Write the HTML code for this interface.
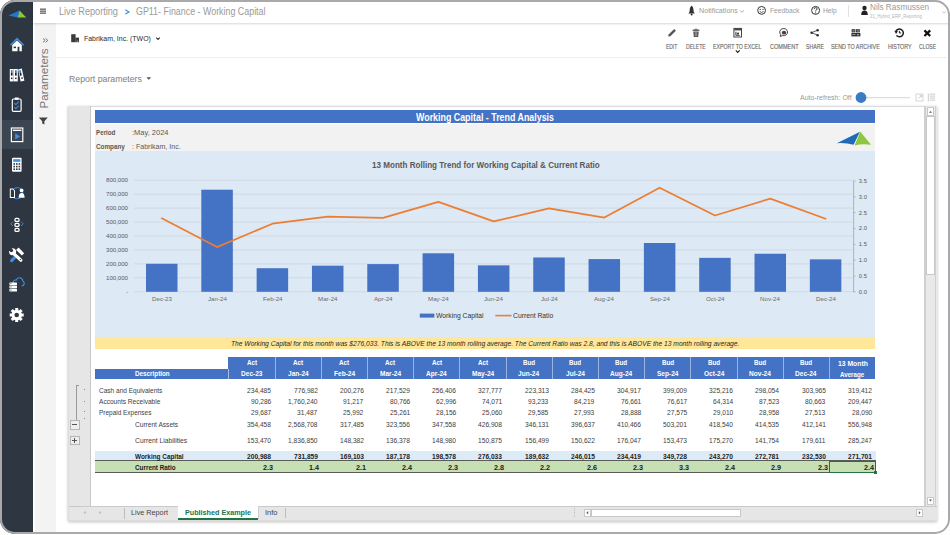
<!DOCTYPE html>
<html><head><meta charset="utf-8">
<style>
*{margin:0;padding:0;box-sizing:border-box}
html,body{width:950px;height:535px;overflow:hidden;background:#fff;font-family:"Liberation Sans",sans-serif}
.a{position:absolute}
.t{position:absolute;white-space:nowrap;line-height:1}
#frame{position:absolute;left:0;top:0;width:949.5px;height:534px;border:2.6px solid #a9a9ab;border-radius:15px;box-shadow:0 0 0 30px #fff;z-index:50;pointer-events:none}
svg{position:absolute;overflow:visible}
</style></head><body>
<!-- sidebar -->
<div class="a" style="left:0;top:0;width:33px;height:535px;background:#2e3741"></div>
<div class="a" style="left:0;top:119.7px;width:33px;height:29.5px;background:#3b4652"></div>
<!-- header -->
<div class="a" style="left:33px;top:0;width:917px;height:22.5px;background:#fff;box-shadow:0 1px 2px rgba(0,0,0,.16);z-index:3"></div>
<!-- param panel -->
<div class="a" style="left:33px;top:22.5px;width:22.7px;height:513px;background:#f3f3f3;border-left:2.6px solid #fdfdfd"></div>
<!-- toolbar separator -->
<div class="a" style="left:55.7px;top:57.3px;width:891px;height:1px;background:#efefef"></div>

<!-- HEADER TEXT -->
<!--HDR-->
<div class="t" style="left:59.00px;top:7px;font-size:10.05px;color:#9a9a9a;z-index:6;transform:scaleX(0.910);transform-origin:0 0;">Live Reporting</div>
<div class="t" style="left:136.00px;top:7px;font-size:10.05px;color:#9a9a9a;z-index:6;transform:scaleX(0.884);transform-origin:0 0;">GP11- Finance - Working Capital</div>
<div class="t" style="left:699.00px;top:7px;font-size:7.25px;color:#9a9a9a;z-index:6;transform:scaleX(0.985);transform-origin:0 0;">Notifications</div>
<div class="t" style="left:769.50px;top:7px;font-size:7.55px;color:#9a9a9a;z-index:6;transform:scaleX(0.889);transform-origin:0 0;">Feedback</div>
<div class="t" style="left:823.00px;top:7px;font-size:7.55px;color:#9a9a9a;z-index:6;transform:scaleX(0.889);transform-origin:0 0;">Help</div>
<div class="t" style="left:870.00px;top:3px;font-size:8.60px;color:#9a9a9a;z-index:6;transform:scaleX(0.950);transform-origin:0 0;">Nils Rasmussen</div>
<div class="t" style="left:870.00px;top:15px;font-size:4.80px;color:#b5b5b5;z-index:6;transform:scaleX(0.898);transform-origin:0 0;">21_Hybrid_ERP_Reporting</div>
<div class="t" style="left:83.60px;top:35px;font-size:7.85px;color:#2a2a2a;z-index:6;transform:scaleX(0.887);transform-origin:0 0;">Fabrikam, Inc. (TWO)</div>
<div class="t" style="left:666.30px;top:44px;font-size:6.70px;color:#666;z-index:6;transform:scaleX(0.740);transform-origin:0 0;-webkit-text-stroke:0.12px #666;">EDIT</div>
<div class="t" style="left:686.00px;top:44px;font-size:6.70px;color:#666;z-index:6;transform:scaleX(0.752);transform-origin:0 0;-webkit-text-stroke:0.12px #666;">DELETE</div>
<div class="t" style="left:713.20px;top:44px;font-size:6.70px;color:#666;z-index:6;transform:scaleX(0.781);transform-origin:0 0;-webkit-text-stroke:0.12px #666;">EXPORT TO EXCEL</div>
<div class="t" style="left:769.70px;top:44px;font-size:6.70px;color:#666;z-index:6;transform:scaleX(0.832);transform-origin:0 0;-webkit-text-stroke:0.12px #666;">COMMENT</div>
<div class="t" style="left:805.70px;top:44px;font-size:6.70px;color:#666;z-index:6;transform:scaleX(0.780);transform-origin:0 0;-webkit-text-stroke:0.12px #666;">SHARE</div>
<div class="t" style="left:831.20px;top:44px;font-size:6.70px;color:#666;z-index:6;transform:scaleX(0.803);transform-origin:0 0;-webkit-text-stroke:0.12px #666;">SEND TO ARCHIVE</div>
<div class="t" style="left:887.60px;top:44px;font-size:6.70px;color:#666;z-index:6;transform:scaleX(0.799);transform-origin:0 0;-webkit-text-stroke:0.12px #666;">HISTORY</div>
<div class="t" style="left:918.50px;top:44px;font-size:6.70px;color:#666;z-index:6;transform:scaleX(0.753);transform-origin:0 0;-webkit-text-stroke:0.12px #666;">CLOSE</div>
<div class="t" style="left:69.00px;top:74px;font-size:9.90px;color:#7d7d7d;z-index:6;transform:scaleX(0.885);transform-origin:0 0;">Report parameters</div>
<div class="t" style="left:800.00px;top:94px;font-size:7.55px;color:#9a9a9a;z-index:6;transform:scaleX(0.927);transform-origin:0 0;">Auto-refresh: Off</div>
<!--/HDR-->
<div class="a" style="left:848px;top:5px;width:1px;height:12px;background:#e2e2e2;z-index:4"></div>
<svg width="950" height="60" viewBox="0 0 950 60" style="left:0;top:0;z-index:6">
  <path d="M740 10.4 L742 12.2 L744 10.4" fill="none" stroke="#999" stroke-width=".8"/>
  <path d="M125.3 9.7 L129 11.9 L125.3 14.1" fill="none" stroke="#3f8ee0" stroke-width="1.15"/>
  <!-- bell -->
  <path d="M688.4 13.4 Q689.8 12.2 689.8 9.6 Q689.8 6.6 691.6 6.6 Q693.4 6.6 693.4 9.6 Q693.4 12.2 694.8 13.4 Z" fill="#333"/>
  <circle cx="691.6" cy="14.4" r="1" fill="#333"/><circle cx="691.6" cy="6.4" r=".7" fill="#333"/>
  <!-- smiley -->
  <circle cx="761.6" cy="10.4" r="3.9" fill="none" stroke="#333" stroke-width="1"/>
  <circle cx="760.2" cy="9.4" r=".6" fill="#333"/><circle cx="763" cy="9.4" r=".6" fill="#333"/>
  <path d="M759.6 11.4 Q761.6 13.6 763.6 11.4" fill="none" stroke="#333" stroke-width=".8"/>
  <!-- help -->
  <circle cx="815.6" cy="10.4" r="4" fill="none" stroke="#333" stroke-width="1"/>
  <path d="M814.2 9.2 Q814.2 7.6 815.6 7.6 Q817.1 7.6 817.1 9 Q817.1 10 815.6 10.6 V11.4" fill="none" stroke="#333" stroke-width=".9"/>
  <circle cx="815.6" cy="12.9" r=".55" fill="#333"/>
  <!-- person -->
  <circle cx="864.5" cy="8" r="2.2" fill="#222"/>
  <path d="M861.2 15 Q861.2 10.6 864.5 10.6 Q867.8 10.6 867.8 15 Z" fill="#222"/>
  <path d="M942.4 11.6 L944 13 L945.6 11.6" fill="none" stroke="#aaa" stroke-width=".7"/>
</svg>

<!-- TOOLBAR -->
<svg width="950" height="60" viewBox="0 0 950 60" style="left:0;top:0;z-index:6">
  <!-- building -->
  <rect x="71.2" y="34.2" width="4.4" height="8" fill="#3a3a3a"/>
  <rect x="75.4" y="37.6" width="3.6" height="4.6" fill="#3a3a3a"/>
  <rect x="76.6" y="40.4" width="1.6" height="1.6" fill="#3f8ee0"/>
  <path d="M156.2 37.6 L158 39.4 L159.8 37.6" fill="none" stroke="#333" stroke-width="1.1"/>
  <!-- edit pencil -->
  <path d="M668.2 36.6 L668.6 34.6 L674.2 29 L675.9 30.7 L670.3 36.3 Z" fill="#555"/>
  <!-- trash -->
  <rect x="692.6" y="29.6" width="6.8" height="1.3" fill="#555"/>
  <rect x="694.7" y="28.8" width="2.6" height="1" fill="#555"/>
  <path d="M693.3 31.4 H698.7 L698.2 37 H693.8 Z" fill="#555"/>
  <g fill="#bbb"><rect x="694.9" y="32.2" width=".6" height="4"/><rect x="696.5" y="32.2" width=".6" height="4"/></g>
  <!-- export -->
  <rect x="733.9" y="28.4" width="7.6" height="8.6" fill="none" stroke="#444" stroke-width="1"/>
  <rect x="734.2" y="28.6" width="7" height="1.8" fill="#444"/>
  <path d="M735.8 31.8 V35.4 H739.8" fill="none" stroke="#444" stroke-width=".9"/>
  <rect x="736.6" y="32.6" width="2.4" height="2" fill="#444"/>
  <path d="M735.8 50.4 L737.7 52.3 L739.6 50.4" fill="none" stroke="#222" stroke-width="1.2"/>
  <!-- comment -->
  <path d="M780.2 36.4 L780.8 34.6 A3.9 3.6 0 1 1 782.6 35.6 Z" fill="none" stroke="#444" stroke-width="1"/>
  <ellipse cx="784" cy="32.7" rx="2.2" ry="1.9" fill="#444"/>
  <!-- share -->
  <g fill="#333"><circle cx="811.6" cy="32.7" r="1.3"/><circle cx="817.6" cy="30.2" r="1.3"/><circle cx="817.6" cy="35.2" r="1.3"/></g>
  <path d="M811.6 32.7 L817.6 30.2 M811.6 32.7 L817.6 35.2" stroke="#333" stroke-width=".8"/>
  <!-- archive -->
  <rect x="851.6" y="29.2" width="3.8" height="3.2" fill="#333"/>
  <rect x="856" y="29.2" width="3.8" height="3.2" fill="#333"/>
  <rect x="851.4" y="33" width="9" height="3.4" fill="#333"/>
  <g fill="#ddd"><rect x="852.4" y="30.6" width="2.2" height=".7"/><rect x="856.8" y="30.6" width="2.2" height=".7"/><rect x="852.4" y="34.2" width="3" height=".6"/><circle cx="858" cy="34.8" r=".8"/></g>
  <!-- history -->
  <path d="M895.8 31.6 A3.9 3.9 0 1 1 896.4 35.4" fill="none" stroke="#222" stroke-width="1.5"/>
  <path d="M894.4 30.8 L896 34 L898 31.2 Z" fill="#222"/>
  <path d="M899.4 30.8 V33 L901.2 33" fill="none" stroke="#222" stroke-width="1"/>
  <!-- close -->
  <path d="M924.4 30.4 L930.2 36 M930.2 30.4 L924.4 36" stroke="#111" stroke-width="2.2"/>
</svg>

<!-- report params / auto refresh -->
<svg width="950" height="110" viewBox="0 0 950 110" style="left:0;top:0;z-index:6">
  <path d="M147 77.6 L148.8 79.4 L150.6 77.6 Z" fill="#555" stroke="#555" stroke-width=".6"/>
  <rect x="866" y="97" width="44" height="1.2" fill="#ddd"/>
  <circle cx="861" cy="97.5" r="5.4" fill="#3b7dc4"/>
  <rect x="916" y="94" width="7" height="7" fill="none" stroke="#ccc" stroke-width=".8"/>
  <path d="M918.4 98.6 L921.6 95.4 M919.6 95.4 H921.6 V97.4" fill="none" stroke="#bbb" stroke-width=".7"/>
  <g fill="#ccc"><rect x="927.8" y="93.6" width="1" height="7.8"/><rect x="929.6" y="93.6" width="5.6" height="1"/><rect x="929.6" y="95.6" width="5.6" height="1"/><rect x="929.6" y="97.6" width="5.6" height="1"/><rect x="929.6" y="99.6" width="5.6" height="1"/></g>
</svg>

<!--EXCEL-->
<div class="a" style="left:68.00px;top:105.60px;width:869.40px;height:415.20px;background:#fff;box-shadow:0 1px 3px rgba(0,0,0,.25);border:1px solid #dcdcdc"></div>
<div class="a" style="left:68.50px;top:106.00px;width:21.00px;height:399.50px;background:#e6e6e6;"></div>
<div class="a" style="left:89.50px;top:106.00px;width:1.10px;height:399.50px;background:#c8c8c8;"></div>
<div class="a" style="left:924.00px;top:106.00px;width:13.00px;height:399.50px;background:#e9e9e9;"></div>
<div class="a" style="left:924.00px;top:106.00px;width:1.60px;height:399.50px;background:#cfcfcf;"></div>
<div class="a" style="left:935.40px;top:106.00px;width:1.00px;height:399.50px;background:#d0d0d0;"></div>
<div class="a" style="left:926.60px;top:107.20px;width:7.80px;height:8.40px;background:#fff;border:0.6px solid #c8c8c8"></div>
<div class="a" style="left:926.60px;top:496.60px;width:7.80px;height:8.40px;background:#fff;border:0.6px solid #c8c8c8"></div>
<svg width="950" height="535" viewBox="0 0 950 535" style="left:0;top:0"><path d="M929 112.8 L930.5 111 L932 112.8 Z" fill="#555"/><path d="M929 499.6 L930.5 501.4 L932 499.6 Z" fill="#555"/></svg>
<div class="a" style="left:68.50px;top:505.50px;width:868.50px;height:14.50px;background:#e6e6e6;"></div>
<div class="a" style="left:68.50px;top:505.50px;width:868.50px;height:1.10px;background:#c9c9c9;"></div>
<div class="a" style="left:95.00px;top:110.30px;width:780.40px;height:13.10px;background:#4472c4;"></div>
<div class="a" style="left:95.00px;top:124.40px;width:780.40px;height:27.00px;background:#f2f2f2;"></div>
<div class="a" style="left:95.00px;top:151.40px;width:780.40px;height:185.20px;background:#dde9f5;"></div>
<div class="a" style="left:95.00px;top:336.60px;width:780.40px;height:12.80px;background:#ffe699;"></div>
<svg width="950" height="535" viewBox="0 0 950 535" style="left:0;top:0"><path d="M836.8 143.2 L860 131.8 L853.6 144.8 Q846 142.6 836.8 143.2 Z" fill="#1f6bb5"/><path d="M860.4 131.8 L871 144.8 Q862 143.4 854.6 145.4 Z" fill="#8dc63f"/></svg>
<div class="a" style="left:926.40px;top:116.00px;width:8.20px;height:159.40px;background:#fff;border:0.6px solid #c8c8c8"></div>
<div class="t" style="left:416.10px;top:113px;font-size:10.15px;font-weight:bold;color:#fff;transform:scaleX(0.876);transform-origin:0 0;">Working Capital - Trend Analysis</div>
<div class="t" style="left:95.80px;top:130px;font-size:7.10px;font-weight:bold;color:#595959;transform:scaleX(0.879);transform-origin:0 0;">Period</div>
<div class="t" style="left:132.20px;top:129px;font-size:7.55px;color:#595959;transform:scaleX(0.992);transform-origin:0 0;">:May, 2024</div>
<div class="t" style="left:95.80px;top:144px;font-size:7.10px;font-weight:bold;color:#595959;transform:scaleX(0.894);transform-origin:0 0;">Company</div>
<div class="t" style="left:132.20px;top:143px;font-size:7.55px;color:#595959;transform:scaleX(0.936);transform-origin:0 0;">: Fabrikam, Inc.</div>
<div class="t" style="left:371.50px;top:162px;font-size:8.15px;font-weight:bold;color:#595959;transform:scaleX(0.994);transform-origin:0 0;">13 Month Rolling Trend for Working Capital &amp; Current Ratio</div>
<svg width="950" height="535" viewBox="0 0 950 535" style="left:0;top:0"><rect x="134.1" y="291.40" width="719.5" height="0.8" fill="#ccd5df"/><rect x="134.1" y="277.45" width="719.5" height="0.8" fill="#ccd5df"/><rect x="134.1" y="263.50" width="719.5" height="0.8" fill="#ccd5df"/><rect x="134.1" y="249.55" width="719.5" height="0.8" fill="#ccd5df"/><rect x="134.1" y="235.60" width="719.5" height="0.8" fill="#ccd5df"/><rect x="134.1" y="221.65" width="719.5" height="0.8" fill="#ccd5df"/><rect x="134.1" y="207.70" width="719.5" height="0.8" fill="#ccd5df"/><rect x="134.1" y="193.75" width="719.5" height="0.8" fill="#ccd5df"/><rect x="134.1" y="179.80" width="719.5" height="0.8" fill="#ccd5df"/><rect x="853.2" y="180.8" width="0.9" height="111.4" fill="#a9adb2"/><rect x="853.2" y="291.45" width="2.6" height="0.7" fill="#a9adb2"/><rect x="853.2" y="275.62" width="2.6" height="0.7" fill="#a9adb2"/><rect x="853.2" y="259.79" width="2.6" height="0.7" fill="#a9adb2"/><rect x="853.2" y="243.96" width="2.6" height="0.7" fill="#a9adb2"/><rect x="853.2" y="228.13" width="2.6" height="0.7" fill="#a9adb2"/><rect x="853.2" y="212.30" width="2.6" height="0.7" fill="#a9adb2"/><rect x="853.2" y="196.47" width="2.6" height="0.7" fill="#a9adb2"/><rect x="853.2" y="180.64" width="2.6" height="0.7" fill="#a9adb2"/><rect x="146.00" y="263.76" width="31.5" height="28.04" fill="#4472c4"/><rect x="201.32" y="189.71" width="31.5" height="102.09" fill="#4472c4"/><rect x="256.64" y="268.21" width="31.5" height="23.59" fill="#4472c4"/><rect x="311.96" y="265.69" width="31.5" height="26.11" fill="#4472c4"/><rect x="367.28" y="264.10" width="31.5" height="27.70" fill="#4472c4"/><rect x="422.60" y="253.29" width="31.5" height="38.51" fill="#4472c4"/><rect x="477.92" y="265.35" width="31.5" height="26.45" fill="#4472c4"/><rect x="533.24" y="257.48" width="31.5" height="34.32" fill="#4472c4"/><rect x="588.56" y="259.10" width="31.5" height="32.70" fill="#4472c4"/><rect x="643.88" y="243.01" width="31.5" height="48.79" fill="#4472c4"/><rect x="699.20" y="257.86" width="31.5" height="33.94" fill="#4472c4"/><rect x="754.52" y="253.75" width="31.5" height="38.05" fill="#4472c4"/><rect x="809.84" y="259.36" width="31.5" height="32.44" fill="#4472c4"/><polyline points="161.75,218.3 217.07,247.1 272.39,223.7 327.71,216.7 383.03,217.9 438.35,201.9 493.67,221.4 548.99,208.3 604.31,217.6 659.63,187.7 714.95,215.5 770.27,198.6 825.59,218.8" fill="none" stroke="#ed7d31" stroke-width="1.7" stroke-linejoin="round" stroke-linecap="round"/><rect x="419.8" y="313.6" width="14.6" height="4" fill="#4472c4"/><rect x="495.3" y="314.8" width="16.2" height="1.6" fill="#ed7d31"/></svg>
<div class="t" style="left:126.20px;top:290px;font-size:5.60px;color:#595959;">-</div>
<div class="t" style="left:106.00px;top:276px;font-size:5.60px;color:#595959;transform:scaleX(1.087);transform-origin:0 0;">100,000</div>
<div class="t" style="left:106.00px;top:262px;font-size:5.60px;color:#595959;transform:scaleX(1.087);transform-origin:0 0;">200,000</div>
<div class="t" style="left:106.00px;top:248px;font-size:5.60px;color:#595959;transform:scaleX(1.087);transform-origin:0 0;">300,000</div>
<div class="t" style="left:106.00px;top:234px;font-size:5.60px;color:#595959;transform:scaleX(1.087);transform-origin:0 0;">400,000</div>
<div class="t" style="left:106.00px;top:220px;font-size:5.60px;color:#595959;transform:scaleX(1.087);transform-origin:0 0;">500,000</div>
<div class="t" style="left:106.00px;top:206px;font-size:5.60px;color:#595959;transform:scaleX(1.087);transform-origin:0 0;">600,000</div>
<div class="t" style="left:106.00px;top:192px;font-size:5.60px;color:#595959;transform:scaleX(1.087);transform-origin:0 0;">700,000</div>
<div class="t" style="left:106.00px;top:178px;font-size:5.60px;color:#595959;transform:scaleX(1.087);transform-origin:0 0;">800,000</div>
<div class="t" style="left:858.80px;top:290px;font-size:5.80px;color:#595959;">0.0</div>
<div class="t" style="left:858.80px;top:274px;font-size:5.80px;color:#595959;">0.5</div>
<div class="t" style="left:858.80px;top:258px;font-size:5.80px;color:#595959;">1.0</div>
<div class="t" style="left:858.80px;top:242px;font-size:5.80px;color:#595959;">1.5</div>
<div class="t" style="left:858.80px;top:226px;font-size:5.80px;color:#595959;">2.0</div>
<div class="t" style="left:858.80px;top:211px;font-size:5.80px;color:#595959;">2.5</div>
<div class="t" style="left:858.80px;top:195px;font-size:5.80px;color:#595959;">3.0</div>
<div class="t" style="left:858.80px;top:179px;font-size:5.80px;color:#595959;">3.5</div>
<div class="t" style="left:151.80px;top:297px;font-size:5.80px;color:#6a6a6a;transform:scaleX(1.064);transform-origin:0 0;">Dec-23</div>
<div class="t" style="left:207.63px;top:297px;font-size:5.80px;color:#6a6a6a;transform:scaleX(1.064);transform-origin:0 0;">Jan-24</div>
<div class="t" style="left:262.61px;top:297px;font-size:5.80px;color:#6a6a6a;transform:scaleX(1.064);transform-origin:0 0;">Feb-24</div>
<div class="t" style="left:317.93px;top:297px;font-size:5.80px;color:#6a6a6a;transform:scaleX(1.064);transform-origin:0 0;">Mar-24</div>
<div class="t" style="left:373.77px;top:297px;font-size:5.80px;color:#6a6a6a;transform:scaleX(1.064);transform-origin:0 0;">Apr-24</div>
<div class="t" style="left:428.06px;top:297px;font-size:5.80px;color:#6a6a6a;transform:scaleX(1.064);transform-origin:0 0;">May-24</div>
<div class="t" style="left:484.23px;top:297px;font-size:5.80px;color:#6a6a6a;transform:scaleX(1.064);transform-origin:0 0;">Jun-24</div>
<div class="t" style="left:540.58px;top:297px;font-size:5.80px;color:#6a6a6a;transform:scaleX(1.064);transform-origin:0 0;">Jul-24</div>
<div class="t" style="left:594.36px;top:297px;font-size:5.80px;color:#6a6a6a;transform:scaleX(1.064);transform-origin:0 0;">Aug-24</div>
<div class="t" style="left:649.68px;top:297px;font-size:5.80px;color:#6a6a6a;transform:scaleX(1.064);transform-origin:0 0;">Sep-24</div>
<div class="t" style="left:705.69px;top:297px;font-size:5.80px;color:#6a6a6a;transform:scaleX(1.064);transform-origin:0 0;">Oct-24</div>
<div class="t" style="left:760.32px;top:297px;font-size:5.80px;color:#6a6a6a;transform:scaleX(1.064);transform-origin:0 0;">Nov-24</div>
<div class="t" style="left:815.64px;top:297px;font-size:5.80px;color:#6a6a6a;transform:scaleX(1.064);transform-origin:0 0;">Dec-24</div>
<div class="t" style="left:436.00px;top:313px;font-size:6.70px;color:#333;transform:scaleX(1.011);transform-origin:0 0;">Working Capital</div>
<div class="t" style="left:512.70px;top:313px;font-size:6.70px;color:#333;transform:scaleX(1.012);transform-origin:0 0;">Current Ratio</div>
<div class="t" style="left:231.00px;top:340px;font-size:7.70px;font-style:italic;color:#262626;transform:scaleX(0.868);transform-origin:0 0;">The Working Capital for this month was $276,033. This is ABOVE the 13 month rolling average. The Current Ratio was 2.8, and this is ABOVE the 13 month rolling average.</div>
<div class="a" style="left:95.00px;top:450.80px;width:780.50px;height:10.20px;background:#ddebf7;"></div>
<div class="a" style="left:95.00px;top:461.00px;width:780.50px;height:11.20px;background:#c6e0b4;"></div>
<div class="a" style="left:95.00px;top:460.40px;width:780.50px;height:1.00px;background:#5b5b5b;"></div>
<div class="a" style="left:95.00px;top:471.60px;width:780.50px;height:1.00px;background:#5b5b5b;"></div>
<div class="a" style="left:94.70px;top:368.50px;width:133.60px;height:10.60px;background:#4472c4;"></div>
<div class="a" style="left:228.30px;top:357.40px;width:647.00px;height:21.70px;background:#4472c4;"></div>
<div class="a" style="left:228.00px;top:368.50px;width:0.90px;height:10.60px;background:#a9bde3;"></div>
<div class="a" style="left:274.64px;top:357.40px;width:0.70px;height:21.70px;background:#9db4de;"></div>
<div class="a" style="left:320.83px;top:357.40px;width:0.70px;height:21.70px;background:#9db4de;"></div>
<div class="a" style="left:367.02px;top:357.40px;width:0.70px;height:21.70px;background:#9db4de;"></div>
<div class="a" style="left:413.21px;top:357.40px;width:0.70px;height:21.70px;background:#9db4de;"></div>
<div class="a" style="left:459.40px;top:357.40px;width:0.70px;height:21.70px;background:#9db4de;"></div>
<div class="a" style="left:505.59px;top:357.40px;width:0.70px;height:21.70px;background:#9db4de;"></div>
<div class="a" style="left:551.78px;top:357.40px;width:0.70px;height:21.70px;background:#9db4de;"></div>
<div class="a" style="left:597.97px;top:357.40px;width:0.70px;height:21.70px;background:#9db4de;"></div>
<div class="a" style="left:644.16px;top:357.40px;width:0.70px;height:21.70px;background:#9db4de;"></div>
<div class="a" style="left:690.35px;top:357.40px;width:0.70px;height:21.70px;background:#9db4de;"></div>
<div class="a" style="left:736.54px;top:357.40px;width:0.70px;height:21.70px;background:#9db4de;"></div>
<div class="a" style="left:782.73px;top:357.40px;width:0.70px;height:21.70px;background:#9db4de;"></div>
<div class="a" style="left:828.92px;top:357.40px;width:0.70px;height:21.70px;background:#9db4de;"></div>
<div class="t" style="left:135.00px;top:370px;font-size:7.00px;font-weight:bold;color:#fff;transform:scaleX(0.901);transform-origin:0 0;">Description</div>
<div class="t" style="left:246.84px;top:359px;font-size:7.00px;font-weight:bold;color:#fff;transform:scaleX(0.896);transform-origin:0 0;">Act</div>
<div class="t" style="left:241.15px;top:370px;font-size:7.00px;font-weight:bold;color:#fff;transform:scaleX(0.936);transform-origin:0 0;">Dec-23</div>
<div class="t" style="left:293.04px;top:359px;font-size:7.00px;font-weight:bold;color:#fff;transform:scaleX(0.896);transform-origin:0 0;">Act</div>
<div class="t" style="left:287.70px;top:370px;font-size:7.00px;font-weight:bold;color:#fff;transform:scaleX(0.936);transform-origin:0 0;">Jan-24</div>
<div class="t" style="left:339.22px;top:359px;font-size:7.00px;font-weight:bold;color:#fff;transform:scaleX(0.896);transform-origin:0 0;">Act</div>
<div class="t" style="left:333.71px;top:370px;font-size:7.00px;font-weight:bold;color:#fff;transform:scaleX(0.936);transform-origin:0 0;">Feb-24</div>
<div class="t" style="left:385.42px;top:359px;font-size:7.00px;font-weight:bold;color:#fff;transform:scaleX(0.896);transform-origin:0 0;">Act</div>
<div class="t" style="left:379.90px;top:370px;font-size:7.00px;font-weight:bold;color:#fff;transform:scaleX(0.936);transform-origin:0 0;">Mar-24</div>
<div class="t" style="left:431.60px;top:359px;font-size:7.00px;font-weight:bold;color:#fff;transform:scaleX(0.896);transform-origin:0 0;">Act</div>
<div class="t" style="left:426.27px;top:370px;font-size:7.00px;font-weight:bold;color:#fff;transform:scaleX(0.936);transform-origin:0 0;">Apr-24</div>
<div class="t" style="left:477.80px;top:359px;font-size:7.00px;font-weight:bold;color:#fff;transform:scaleX(0.896);transform-origin:0 0;">Act</div>
<div class="t" style="left:471.73px;top:370px;font-size:7.00px;font-weight:bold;color:#fff;transform:scaleX(0.936);transform-origin:0 0;">May-24</div>
<div class="t" style="left:522.93px;top:359px;font-size:7.00px;font-weight:bold;color:#fff;transform:scaleX(0.896);transform-origin:0 0;">Bud</div>
<div class="t" style="left:518.47px;top:370px;font-size:7.00px;font-weight:bold;color:#fff;transform:scaleX(0.936);transform-origin:0 0;">Jun-24</div>
<div class="t" style="left:569.12px;top:359px;font-size:7.00px;font-weight:bold;color:#fff;transform:scaleX(0.896);transform-origin:0 0;">Bud</div>
<div class="t" style="left:565.75px;top:370px;font-size:7.00px;font-weight:bold;color:#fff;transform:scaleX(0.936);transform-origin:0 0;">Jul-24</div>
<div class="t" style="left:615.31px;top:359px;font-size:7.00px;font-weight:bold;color:#fff;transform:scaleX(0.896);transform-origin:0 0;">Bud</div>
<div class="t" style="left:610.30px;top:370px;font-size:7.00px;font-weight:bold;color:#fff;transform:scaleX(0.936);transform-origin:0 0;">Aug-24</div>
<div class="t" style="left:661.50px;top:359px;font-size:7.00px;font-weight:bold;color:#fff;transform:scaleX(0.896);transform-origin:0 0;">Bud</div>
<div class="t" style="left:656.86px;top:370px;font-size:7.00px;font-weight:bold;color:#fff;transform:scaleX(0.936);transform-origin:0 0;">Sep-24</div>
<div class="t" style="left:707.69px;top:359px;font-size:7.00px;font-weight:bold;color:#fff;transform:scaleX(0.896);transform-origin:0 0;">Bud</div>
<div class="t" style="left:703.60px;top:370px;font-size:7.00px;font-weight:bold;color:#fff;transform:scaleX(0.936);transform-origin:0 0;">Oct-24</div>
<div class="t" style="left:753.88px;top:359px;font-size:7.00px;font-weight:bold;color:#fff;transform:scaleX(0.896);transform-origin:0 0;">Bud</div>
<div class="t" style="left:749.05px;top:370px;font-size:7.00px;font-weight:bold;color:#fff;transform:scaleX(0.936);transform-origin:0 0;">Nov-24</div>
<div class="t" style="left:800.07px;top:359px;font-size:7.00px;font-weight:bold;color:#fff;transform:scaleX(0.896);transform-origin:0 0;">Bud</div>
<div class="t" style="left:795.42px;top:370px;font-size:7.00px;font-weight:bold;color:#fff;transform:scaleX(0.936);transform-origin:0 0;">Dec-24</div>
<div class="t" style="left:837.60px;top:360px;font-size:7.00px;font-weight:bold;color:#fff;transform:scaleX(0.970);transform-origin:0 0;">13 Month</div>
<div class="t" style="left:840.40px;top:371px;font-size:7.00px;font-weight:bold;color:#fff;transform:scaleX(0.884);transform-origin:0 0;">Average</div>
<div class="t" style="left:98.90px;top:387px;font-size:7.55px;color:#404040;transform:scaleX(0.863);transform-origin:0 0;">Cash and Equivalents</div>
<div class="t" style="left:247.39px;top:388px;font-size:7.10px;color:#404040;transform:scaleX(0.935);transform-origin:0 0;">234,485</div>
<div class="t" style="left:293.58px;top:388px;font-size:7.10px;color:#404040;transform:scaleX(0.935);transform-origin:0 0;">776,982</div>
<div class="t" style="left:339.77px;top:388px;font-size:7.10px;color:#404040;transform:scaleX(0.935);transform-origin:0 0;">200,276</div>
<div class="t" style="left:385.96px;top:388px;font-size:7.10px;color:#404040;transform:scaleX(0.935);transform-origin:0 0;">217,529</div>
<div class="t" style="left:432.15px;top:388px;font-size:7.10px;color:#404040;transform:scaleX(0.935);transform-origin:0 0;">256,406</div>
<div class="t" style="left:478.34px;top:388px;font-size:7.10px;color:#404040;transform:scaleX(0.935);transform-origin:0 0;">327,777</div>
<div class="t" style="left:524.53px;top:388px;font-size:7.10px;color:#404040;transform:scaleX(0.935);transform-origin:0 0;">223,313</div>
<div class="t" style="left:570.72px;top:388px;font-size:7.10px;color:#404040;transform:scaleX(0.935);transform-origin:0 0;">284,425</div>
<div class="t" style="left:616.91px;top:388px;font-size:7.10px;color:#404040;transform:scaleX(0.935);transform-origin:0 0;">304,917</div>
<div class="t" style="left:663.10px;top:388px;font-size:7.10px;color:#404040;transform:scaleX(0.935);transform-origin:0 0;">399,009</div>
<div class="t" style="left:709.29px;top:388px;font-size:7.10px;color:#404040;transform:scaleX(0.935);transform-origin:0 0;">325,216</div>
<div class="t" style="left:755.48px;top:388px;font-size:7.10px;color:#404040;transform:scaleX(0.935);transform-origin:0 0;">298,054</div>
<div class="t" style="left:801.67px;top:388px;font-size:7.10px;color:#404040;transform:scaleX(0.935);transform-origin:0 0;">303,965</div>
<div class="t" style="left:847.86px;top:388px;font-size:7.10px;color:#404040;transform:scaleX(0.935);transform-origin:0 0;">319,412</div>
<div class="t" style="left:98.90px;top:398px;font-size:7.55px;color:#404040;transform:scaleX(0.871);transform-origin:0 0;">Accounts Receivable</div>
<div class="t" style="left:251.07px;top:399px;font-size:7.10px;color:#404040;transform:scaleX(0.935);transform-origin:0 0;">90,286</div>
<div class="t" style="left:288.04px;top:399px;font-size:7.10px;color:#404040;transform:scaleX(0.935);transform-origin:0 0;">1,760,240</div>
<div class="t" style="left:343.45px;top:399px;font-size:7.10px;color:#404040;transform:scaleX(0.935);transform-origin:0 0;">91,217</div>
<div class="t" style="left:389.64px;top:399px;font-size:7.10px;color:#404040;transform:scaleX(0.935);transform-origin:0 0;">80,766</div>
<div class="t" style="left:435.83px;top:399px;font-size:7.10px;color:#404040;transform:scaleX(0.935);transform-origin:0 0;">62,996</div>
<div class="t" style="left:482.02px;top:399px;font-size:7.10px;color:#404040;transform:scaleX(0.935);transform-origin:0 0;">74,071</div>
<div class="t" style="left:528.21px;top:399px;font-size:7.10px;color:#404040;transform:scaleX(0.935);transform-origin:0 0;">93,233</div>
<div class="t" style="left:574.40px;top:399px;font-size:7.10px;color:#404040;transform:scaleX(0.935);transform-origin:0 0;">84,219</div>
<div class="t" style="left:620.59px;top:399px;font-size:7.10px;color:#404040;transform:scaleX(0.935);transform-origin:0 0;">76,661</div>
<div class="t" style="left:666.78px;top:399px;font-size:7.10px;color:#404040;transform:scaleX(0.935);transform-origin:0 0;">76,617</div>
<div class="t" style="left:712.97px;top:399px;font-size:7.10px;color:#404040;transform:scaleX(0.935);transform-origin:0 0;">64,314</div>
<div class="t" style="left:759.16px;top:399px;font-size:7.10px;color:#404040;transform:scaleX(0.935);transform-origin:0 0;">87,523</div>
<div class="t" style="left:805.35px;top:399px;font-size:7.10px;color:#404040;transform:scaleX(0.935);transform-origin:0 0;">80,663</div>
<div class="t" style="left:847.86px;top:399px;font-size:7.10px;color:#404040;transform:scaleX(0.935);transform-origin:0 0;">209,447</div>
<div class="t" style="left:98.90px;top:409px;font-size:7.55px;color:#404040;transform:scaleX(0.855);transform-origin:0 0;">Prepaid Expenses</div>
<div class="t" style="left:251.07px;top:410px;font-size:7.10px;color:#404040;transform:scaleX(0.935);transform-origin:0 0;">29,687</div>
<div class="t" style="left:297.26px;top:410px;font-size:7.10px;color:#404040;transform:scaleX(0.935);transform-origin:0 0;">31,487</div>
<div class="t" style="left:343.45px;top:410px;font-size:7.10px;color:#404040;transform:scaleX(0.935);transform-origin:0 0;">25,992</div>
<div class="t" style="left:389.64px;top:410px;font-size:7.10px;color:#404040;transform:scaleX(0.935);transform-origin:0 0;">25,261</div>
<div class="t" style="left:435.83px;top:410px;font-size:7.10px;color:#404040;transform:scaleX(0.935);transform-origin:0 0;">28,156</div>
<div class="t" style="left:482.02px;top:410px;font-size:7.10px;color:#404040;transform:scaleX(0.935);transform-origin:0 0;">25,060</div>
<div class="t" style="left:528.21px;top:410px;font-size:7.10px;color:#404040;transform:scaleX(0.935);transform-origin:0 0;">29,585</div>
<div class="t" style="left:574.40px;top:410px;font-size:7.10px;color:#404040;transform:scaleX(0.935);transform-origin:0 0;">27,993</div>
<div class="t" style="left:620.59px;top:410px;font-size:7.10px;color:#404040;transform:scaleX(0.935);transform-origin:0 0;">28,888</div>
<div class="t" style="left:666.78px;top:410px;font-size:7.10px;color:#404040;transform:scaleX(0.935);transform-origin:0 0;">27,575</div>
<div class="t" style="left:712.97px;top:410px;font-size:7.10px;color:#404040;transform:scaleX(0.935);transform-origin:0 0;">29,010</div>
<div class="t" style="left:759.16px;top:410px;font-size:7.10px;color:#404040;transform:scaleX(0.935);transform-origin:0 0;">28,958</div>
<div class="t" style="left:805.35px;top:410px;font-size:7.10px;color:#404040;transform:scaleX(0.935);transform-origin:0 0;">27,513</div>
<div class="t" style="left:851.54px;top:410px;font-size:7.10px;color:#404040;transform:scaleX(0.935);transform-origin:0 0;">28,090</div>
<div class="t" style="left:134.80px;top:421px;font-size:7.55px;color:#404040;transform:scaleX(0.872);transform-origin:0 0;">Current Assets</div>
<div class="t" style="left:247.39px;top:422px;font-size:7.10px;color:#404040;transform:scaleX(0.935);transform-origin:0 0;">354,458</div>
<div class="t" style="left:288.04px;top:422px;font-size:7.10px;color:#404040;transform:scaleX(0.935);transform-origin:0 0;">2,568,708</div>
<div class="t" style="left:339.77px;top:422px;font-size:7.10px;color:#404040;transform:scaleX(0.935);transform-origin:0 0;">317,485</div>
<div class="t" style="left:385.96px;top:422px;font-size:7.10px;color:#404040;transform:scaleX(0.935);transform-origin:0 0;">323,556</div>
<div class="t" style="left:432.15px;top:422px;font-size:7.10px;color:#404040;transform:scaleX(0.935);transform-origin:0 0;">347,558</div>
<div class="t" style="left:478.34px;top:422px;font-size:7.10px;color:#404040;transform:scaleX(0.935);transform-origin:0 0;">426,908</div>
<div class="t" style="left:524.53px;top:422px;font-size:7.10px;color:#404040;transform:scaleX(0.935);transform-origin:0 0;">346,131</div>
<div class="t" style="left:570.72px;top:422px;font-size:7.10px;color:#404040;transform:scaleX(0.935);transform-origin:0 0;">396,637</div>
<div class="t" style="left:616.91px;top:422px;font-size:7.10px;color:#404040;transform:scaleX(0.935);transform-origin:0 0;">410,466</div>
<div class="t" style="left:663.10px;top:422px;font-size:7.10px;color:#404040;transform:scaleX(0.935);transform-origin:0 0;">503,201</div>
<div class="t" style="left:709.29px;top:422px;font-size:7.10px;color:#404040;transform:scaleX(0.935);transform-origin:0 0;">418,540</div>
<div class="t" style="left:755.48px;top:422px;font-size:7.10px;color:#404040;transform:scaleX(0.935);transform-origin:0 0;">414,535</div>
<div class="t" style="left:801.67px;top:422px;font-size:7.10px;color:#404040;transform:scaleX(0.935);transform-origin:0 0;">412,141</div>
<div class="t" style="left:847.86px;top:422px;font-size:7.10px;color:#404040;transform:scaleX(0.935);transform-origin:0 0;">556,948</div>
<div class="t" style="left:134.80px;top:437px;font-size:7.55px;color:#404040;transform:scaleX(0.895);transform-origin:0 0;">Current Liabilities</div>
<div class="t" style="left:247.39px;top:438px;font-size:7.10px;color:#404040;transform:scaleX(0.935);transform-origin:0 0;">153,470</div>
<div class="t" style="left:288.04px;top:438px;font-size:7.10px;color:#404040;transform:scaleX(0.935);transform-origin:0 0;">1,836,850</div>
<div class="t" style="left:339.77px;top:438px;font-size:7.10px;color:#404040;transform:scaleX(0.935);transform-origin:0 0;">148,382</div>
<div class="t" style="left:385.96px;top:438px;font-size:7.10px;color:#404040;transform:scaleX(0.935);transform-origin:0 0;">136,378</div>
<div class="t" style="left:432.15px;top:438px;font-size:7.10px;color:#404040;transform:scaleX(0.935);transform-origin:0 0;">148,980</div>
<div class="t" style="left:478.34px;top:438px;font-size:7.10px;color:#404040;transform:scaleX(0.935);transform-origin:0 0;">150,875</div>
<div class="t" style="left:524.53px;top:438px;font-size:7.10px;color:#404040;transform:scaleX(0.935);transform-origin:0 0;">156,499</div>
<div class="t" style="left:570.72px;top:438px;font-size:7.10px;color:#404040;transform:scaleX(0.935);transform-origin:0 0;">150,622</div>
<div class="t" style="left:616.91px;top:438px;font-size:7.10px;color:#404040;transform:scaleX(0.935);transform-origin:0 0;">176,047</div>
<div class="t" style="left:663.10px;top:438px;font-size:7.10px;color:#404040;transform:scaleX(0.935);transform-origin:0 0;">153,473</div>
<div class="t" style="left:709.29px;top:438px;font-size:7.10px;color:#404040;transform:scaleX(0.935);transform-origin:0 0;">175,270</div>
<div class="t" style="left:755.48px;top:438px;font-size:7.10px;color:#404040;transform:scaleX(0.935);transform-origin:0 0;">141,754</div>
<div class="t" style="left:802.17px;top:438px;font-size:7.10px;color:#404040;transform:scaleX(0.935);transform-origin:0 0;">179,611</div>
<div class="t" style="left:847.86px;top:438px;font-size:7.10px;color:#404040;transform:scaleX(0.935);transform-origin:0 0;">285,247</div>
<div class="t" style="left:134.80px;top:453px;font-size:7.55px;font-weight:bold;color:#1a1a1a;transform:scaleX(0.848);transform-origin:0 0;">Working Capital</div>
<div class="t" style="left:247.39px;top:454px;font-size:7.10px;font-weight:bold;color:#222;transform:scaleX(0.935);transform-origin:0 0;">200,988</div>
<div class="t" style="left:293.58px;top:454px;font-size:7.10px;font-weight:bold;color:#222;transform:scaleX(0.935);transform-origin:0 0;">731,859</div>
<div class="t" style="left:339.77px;top:454px;font-size:7.10px;font-weight:bold;color:#222;transform:scaleX(0.935);transform-origin:0 0;">169,103</div>
<div class="t" style="left:385.96px;top:454px;font-size:7.10px;font-weight:bold;color:#222;transform:scaleX(0.935);transform-origin:0 0;">187,178</div>
<div class="t" style="left:432.15px;top:454px;font-size:7.10px;font-weight:bold;color:#222;transform:scaleX(0.935);transform-origin:0 0;">198,578</div>
<div class="t" style="left:478.34px;top:454px;font-size:7.10px;font-weight:bold;color:#222;transform:scaleX(0.935);transform-origin:0 0;">276,033</div>
<div class="t" style="left:524.53px;top:454px;font-size:7.10px;font-weight:bold;color:#222;transform:scaleX(0.935);transform-origin:0 0;">189,632</div>
<div class="t" style="left:570.72px;top:454px;font-size:7.10px;font-weight:bold;color:#222;transform:scaleX(0.935);transform-origin:0 0;">246,015</div>
<div class="t" style="left:616.91px;top:454px;font-size:7.10px;font-weight:bold;color:#222;transform:scaleX(0.935);transform-origin:0 0;">234,419</div>
<div class="t" style="left:663.10px;top:454px;font-size:7.10px;font-weight:bold;color:#222;transform:scaleX(0.935);transform-origin:0 0;">349,728</div>
<div class="t" style="left:709.29px;top:454px;font-size:7.10px;font-weight:bold;color:#222;transform:scaleX(0.935);transform-origin:0 0;">243,270</div>
<div class="t" style="left:755.48px;top:454px;font-size:7.10px;font-weight:bold;color:#222;transform:scaleX(0.935);transform-origin:0 0;">272,781</div>
<div class="t" style="left:801.67px;top:454px;font-size:7.10px;font-weight:bold;color:#222;transform:scaleX(0.935);transform-origin:0 0;">232,530</div>
<div class="t" style="left:847.86px;top:454px;font-size:7.10px;font-weight:bold;color:#222;transform:scaleX(0.935);transform-origin:0 0;">271,701</div>
<div class="t" style="left:134.80px;top:464px;font-size:7.55px;font-weight:bold;color:#1a1a1a;transform:scaleX(0.842);transform-origin:0 0;">Current Ratio</div>
<div class="t" style="left:263.29px;top:464px;font-size:7.60px;font-weight:bold;color:#222;transform:scaleX(0.956);transform-origin:0 0;">2.3</div>
<div class="t" style="left:309.48px;top:464px;font-size:7.60px;font-weight:bold;color:#222;transform:scaleX(0.956);transform-origin:0 0;">1.4</div>
<div class="t" style="left:355.67px;top:464px;font-size:7.60px;font-weight:bold;color:#222;transform:scaleX(0.956);transform-origin:0 0;">2.1</div>
<div class="t" style="left:401.86px;top:464px;font-size:7.60px;font-weight:bold;color:#222;transform:scaleX(0.956);transform-origin:0 0;">2.4</div>
<div class="t" style="left:448.05px;top:464px;font-size:7.60px;font-weight:bold;color:#222;transform:scaleX(0.956);transform-origin:0 0;">2.3</div>
<div class="t" style="left:494.24px;top:464px;font-size:7.60px;font-weight:bold;color:#222;transform:scaleX(0.956);transform-origin:0 0;">2.8</div>
<div class="t" style="left:540.43px;top:464px;font-size:7.60px;font-weight:bold;color:#222;transform:scaleX(0.956);transform-origin:0 0;">2.2</div>
<div class="t" style="left:586.62px;top:464px;font-size:7.60px;font-weight:bold;color:#222;transform:scaleX(0.956);transform-origin:0 0;">2.6</div>
<div class="t" style="left:632.81px;top:464px;font-size:7.60px;font-weight:bold;color:#222;transform:scaleX(0.956);transform-origin:0 0;">2.3</div>
<div class="t" style="left:679.00px;top:464px;font-size:7.60px;font-weight:bold;color:#222;transform:scaleX(0.956);transform-origin:0 0;">3.3</div>
<div class="t" style="left:725.19px;top:464px;font-size:7.60px;font-weight:bold;color:#222;transform:scaleX(0.956);transform-origin:0 0;">2.4</div>
<div class="t" style="left:771.38px;top:464px;font-size:7.60px;font-weight:bold;color:#222;transform:scaleX(0.956);transform-origin:0 0;">2.9</div>
<div class="t" style="left:817.57px;top:464px;font-size:7.60px;font-weight:bold;color:#222;transform:scaleX(0.956);transform-origin:0 0;">2.3</div>
<div class="t" style="left:863.76px;top:464px;font-size:7.60px;font-weight:bold;color:#222;transform:scaleX(0.956);transform-origin:0 0;">2.4</div>
<div class="a" style="left:829.27px;top:460.60px;width:46.79px;height:12.20px;background:transparent;border:1.6px solid #217346;z-index:2"></div>
<div class="a" style="left:874.26px;top:471.40px;width:2.60px;height:2.60px;background:#217346;z-index:3"></div>
<div class="a" style="left:75.80px;top:385.20px;width:1.10px;height:34.80px;background:#9a9a9a;"></div>
<div class="a" style="left:75.80px;top:385.20px;width:3.70px;height:1.00px;background:#9a9a9a;"></div>
<div class="a" style="left:84.00px;top:389.30px;width:1.00px;height:1.00px;background:#8a8a8a;"></div>
<div class="a" style="left:84.00px;top:400.50px;width:1.00px;height:1.00px;background:#8a8a8a;"></div>
<div class="a" style="left:84.00px;top:411.00px;width:1.00px;height:1.00px;background:#8a8a8a;"></div>
<div class="a" style="left:84.00px;top:418.30px;width:1.00px;height:1.00px;background:#8a8a8a;"></div>
<div class="a" style="left:70.20px;top:420.00px;width:9.50px;height:9.60px;background:#eeeeee;border:0.8px solid #b5b5b5"></div>
<div class="a" style="left:72.40px;top:424.40px;width:5.00px;height:1.00px;background:#555;"></div>
<div class="a" style="left:70.20px;top:435.60px;width:9.50px;height:9.80px;background:#eeeeee;border:0.8px solid #b5b5b5"></div>
<div class="a" style="left:72.40px;top:440.00px;width:5.00px;height:1.00px;background:#555;"></div>
<div class="a" style="left:74.40px;top:438.00px;width:1.00px;height:5.00px;background:#555;"></div>
<svg width="950" height="535" viewBox="0 0 950 535" style="left:0;top:0"><path d="M85.6 511 L83.6 512.6 L85.6 514.2 Z" fill="#b8b8b8"/><path d="M99.4 511 L101.4 512.6 L99.4 514.2 Z" fill="#b8b8b8"/></svg>
<div class="a" style="left:124.00px;top:507.50px;width:1.00px;height:11.00px;background:#bdbdbd;"></div>
<div class="a" style="left:177.60px;top:506.00px;width:80.10px;height:13.80px;background:#fff;"></div>
<div class="a" style="left:177.60px;top:518.30px;width:80.10px;height:1.60px;background:#217346;"></div>
<div class="a" style="left:257.70px;top:506.20px;width:0.90px;height:13.30px;background:#cfcfcf;"></div>
<div class="a" style="left:285.20px;top:508.00px;width:1.00px;height:10.00px;background:#bdbdbd;"></div>
<div class="t" style="left:131.00px;top:509px;font-size:7.25px;color:#444;">Live Report</div>
<div class="t" style="left:185.00px;top:509px;font-size:7.25px;font-weight:bold;color:#217346;transform:scaleX(0.993);transform-origin:0 0;">Published Example</div>
<div class="t" style="left:264.50px;top:509px;font-size:7.25px;color:#444;transform:scaleX(1.032);transform-origin:0 0;">Info</div>
<div class="a" style="left:574.00px;top:508.40px;width:1.50px;height:8.60px;background:#c8c8c8;background:none;border-left:1px dotted #bbb"></div>
<div class="a" style="left:583.80px;top:508.80px;width:6.80px;height:7.80px;background:#fff;border:0.6px solid #c8c8c8"></div>
<div class="a" style="left:590.60px;top:508.80px;width:150.00px;height:7.80px;background:#fff;border:0.6px solid #c8c8c8"></div>
<div class="a" style="left:916.40px;top:508.80px;width:7.00px;height:7.80px;background:#fff;border:0.6px solid #c8c8c8"></div>
<svg width="950" height="535" viewBox="0 0 950 535" style="left:0;top:0"><path d="M588.2 511 L586.4 512.7 L588.2 514.4 Z" fill="#555"/><path d="M918.8 511 L920.6 512.7 L918.8 514.4 Z" fill="#555"/></svg>
<!--/EXCEL-->
<div id="frame"></div>

<!-- SIDEBAR ICONS -->
<svg width="950" height="535" viewBox="0 0 950 535" style="left:0;top:0;z-index:5">
  <!-- logo -->
  <path d="M8.5 15.6 L19.6 10.6 L17.6 17.4 Z" fill="#1f7ad6"/>
  <path d="M19.6 10.6 L26.2 17.6 L17.6 17.4 Z" fill="#8cc63f"/>
  <!-- home -->
  <path d="M10.4 45.2 L17 38.6 L23.6 45.2" fill="none" stroke="#3f8ee0" stroke-width="1.6"/>
  <path d="M12.2 45 L17 40.4 L21.8 45 V51.3 H19.4 V46.8 H17.6 V51.3 H12.2 Z" fill="#fff"/>
  <rect x="13.6" y="46.6" width="2.4" height="1.6" fill="#2e3741"/>
  <!-- binders -->
  <g fill="#fff">
    <rect x="9.8" y="69" width="3.9" height="12.4"/>
    <rect x="13.9" y="69" width="3.9" height="12.4"/>
    <path d="M18.2 69.4 L21.8 68.6 L24.4 80.8 L20.6 81.6 Z"/>
  </g>
  <g fill="#1a1f26"><rect x="10.9" y="72.4" width="1.7" height="3.2"/><rect x="15" y="72.4" width="1.7" height="3.2"/><path d="M19.5 72.6 L21.1 72.3 L21.8 75.4 L20.2 75.7 Z"/>
  <rect x="11" y="77.6" width="1.5" height="1.5"/><rect x="15.1" y="77.6" width="1.5" height="1.5"/><path d="M21.2 77.6 L22.6 77.3 L22.9 78.7 L21.5 79 Z"/></g>
  <g fill="#2f7fd6"><rect x="10.9" y="70.2" width="1.7" height="2.2"/><rect x="15" y="70.2" width="1.7" height="2.2"/><path d="M19 70.4 L20.6 70.1 L21.1 72.3 L19.5 72.6 Z"/></g>
  <!-- clipboard -->
  <rect x="12.3" y="99" width="8.8" height="12.4" rx="1.2" fill="none" stroke="#fff" stroke-width="1.2"/>
  <rect x="14.6" y="97.4" width="4.2" height="2.4" rx=".8" fill="#fff"/>
  <path d="M14.4 103.2 L15.8 104.6 L18.8 101.6 M14.4 107.2 L15.8 108.6 L18.8 105.6" fill="none" stroke="#3f8ee0" stroke-width="1.1"/>
  <!-- report (active) -->
  <rect x="11.4" y="128" width="11.4" height="13.6" fill="none" stroke="#fff" stroke-width="1.2"/>
  <rect x="12.8" y="129.6" width="8.6" height="1.4" fill="#fff"/>
  <path d="M15.2 133.2 L20.2 136.4 L15.2 139.6 Z" fill="#3f8ee0"/>
  <!-- calculator -->
  <rect x="12" y="157.8" width="9.6" height="14" rx="1" fill="#fff"/>
  <rect x="13.2" y="159.2" width="7.2" height="2.6" fill="#3f8ee0"/>
  <g fill="#2e3741">
    <rect x="13.4" y="163.2" width="1.6" height="1.6"/><rect x="16" y="163.2" width="1.6" height="1.6"/><rect x="18.6" y="163.2" width="1.6" height="1.6"/>
    <rect x="13.4" y="165.8" width="1.6" height="1.6"/><rect x="16" y="165.8" width="1.6" height="1.6"/><rect x="18.6" y="165.8" width="1.6" height="1.6"/>
    <rect x="13.4" y="168.4" width="1.6" height="1.6"/><rect x="16" y="168.4" width="1.6" height="1.6"/><rect x="18.6" y="168.4" width="1.6" height="1.6"/>
  </g>
  <!-- doc-person -->
  <circle cx="17.2" cy="193.2" r="5.6" fill="none" stroke="#3f8ee0" stroke-width="1"/>
  <path d="M9.8 188.4 H13 L15 190.4 V198 H9.8 Z" fill="#fff"/>
  <path d="M10.8 189.4 H12.6 L14 190.8 V197 H10.8 Z" fill="#2e3741"/>
  <circle cx="21.6" cy="190.4" r="1.9" fill="#fff"/>
  <path d="M18.6 197.8 Q18.6 193 21.6 193 Q24.6 193 24.6 197.8 Z" fill="#fff"/>
  <!-- hierarchy -->
  <g fill="none" stroke="#fff" stroke-width="1.3"><rect x="15" y="218.4" width="4" height="3" rx="1"/><rect x="15" y="223.4" width="4" height="3" rx="1"/><rect x="15" y="228.4" width="4" height="3" rx="1"/></g>
  <path d="M13 221.6 L10.8 223.8 L13 226 M21 221.6 L23.2 223.8 L21 226" fill="none" stroke="#3f8ee0" stroke-width="0.9"/>
  <!-- tools -->
  <path d="M11.6 260.6 L15.8 256.4" stroke="#3f8ee0" stroke-width="3" stroke-linecap="round"/>
  <rect x="16.2" y="249.9" width="8" height="3.3" rx=".4" fill="#fff" transform="rotate(45 20.2 251.55)"/>
  <path d="M14 253.8 L20.8 260.2" stroke="#fff" stroke-width="3.2" stroke-linecap="round"/>
  <circle cx="12.6" cy="251.8" r="3.5" fill="#fff"/>
  <circle cx="11.4" cy="250.5" r="1.7" fill="#2e3741"/>
  <path d="M11.4 248.8 L8.6 248.8 L8.6 251 L10 251 Z" fill="#2e3741"/>
  <rect x="9" y="246.6" width="2.6" height="3.4" fill="#2e3741" transform="rotate(45 10.3 248.3)"/>
  <circle cx="20.4" cy="259.6" r=".7" fill="#2e3741"/>
  <!-- cloud db -->
  <path d="M14.6 284 Q12.8 283.4 13.4 281.4 Q14 279.6 16 280.2 Q17 277.4 20 277.8 Q22.6 278.4 22.8 281 Q24.6 281.8 24.2 284 Q23.6 286 21.6 286" fill="none" stroke="#3f8ee0" stroke-width="1.1"/>
  <g fill="#fff"><rect x="9.4" y="282.4" width="7.6" height="2.6" rx=".6"/><rect x="9.4" y="285.6" width="7.6" height="2.6" rx=".6"/><rect x="9.4" y="288.8" width="7.6" height="2.8" rx=".6"/></g>
  <g fill="#2e3741"><rect x="10.4" y="283.3" width="1" height="0.9"/><rect x="10.4" y="286.5" width="1" height="0.9"/><rect x="10.4" y="289.7" width="1" height="0.9"/></g>
  <!-- gear -->
  <g transform="translate(16.7 315)">
    <path d="M-1.3 -7 H1.3 L1.7 -4.8 L3.6 -4 L5.4 -5.3 L7.2 -3.5 L5.9 -1.7 L6.6 .2 L7 .2 V2.6 L4.9 3 L4 4.9 L5.3 6.7 L3.5 8.5 L1.7 7.2 Z" fill="none"/>
    <circle r="5.2" fill="#fff"/>
    <g fill="#fff">
      <rect x="-1.5" y="-7" width="3" height="14"/>
      <rect x="-1.5" y="-7" width="3" height="14" transform="rotate(45)"/>
      <rect x="-1.5" y="-7" width="3" height="14" transform="rotate(90)"/>
      <rect x="-1.5" y="-7" width="3" height="14" transform="rotate(135)"/>
    </g>
    <circle r="2.3" fill="#2e3741"/>
  </g>
  <!-- param panel -->
  <path d="M43 38.4 L45.2 40.4 L43 42.4 M45.6 38.4 L47.8 40.4 L45.6 42.4" fill="none" stroke="#666" stroke-width=".9"/>
  <text transform="translate(47.6 108.4) rotate(-90)" font-family="Liberation Sans" font-size="11.6" fill="#777">Parameters</text>
  <path d="M38.8 117.6 H47.8 L44.4 121.2 V124.6 L42.2 123.4 V121.2 Z" fill="#444"/>
  <!-- hamburger -->
  <g fill="#444"><rect x="40" y="8.6" width="6" height="1.1"/><rect x="40" y="10.6" width="6" height="1.1"/><rect x="40" y="12.6" width="6" height="1.1"/></g>
</svg>
</body></html>
